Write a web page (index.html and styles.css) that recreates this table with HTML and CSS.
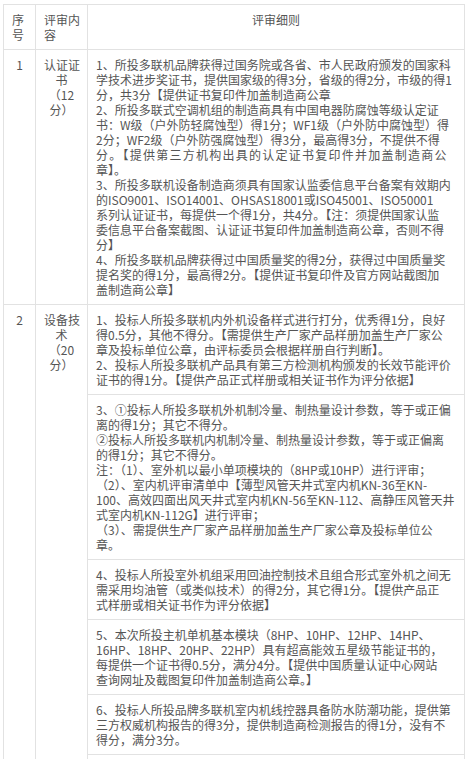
FILE: index.html
```html
<!DOCTYPE html>
<html lang="zh-CN">
<head>
<meta charset="utf-8">
<title>评审细则</title>
<link rel="stylesheet" href="styles.css">
</head>
<body>
<table class="rules">
  <colgroup>
    <col class="c-no">
    <col class="c-item">
    <col class="c-detail">
  </colgroup>
  <thead>
    <tr>
      <th class="h-left">序<br>号</th>
      <th class="h-left">评审内<br>容</th>
      <th class="h-center">评审细则</th>
    </tr>
  </thead>
  <tbody>
    <tr>
      <td class="no">1</td>
      <td class="item">认证证<br>书<br>（12<br>分）</td>
      <td class="detail">
        <p>1、所投多联机品牌获得过国务院或各省、市人民政府颁发的国家科<br>学技术进步奖证书，提供国家级的得3分，省级的得2分，市级的得1<br>分，共3分【提供证书复印件加盖制造商公章</p>
        <p>2、所投多联式空调机组的制造商具有中国电器防腐蚀等级认定证<br>书：W级（户外防轻腐蚀型）得1分；WF1级（户外防中腐蚀型）得<br>2分；WF2级（户外防强腐蚀型）得3分，最高得3分，不提供不得<br><span class="wide">分。【提供第三方机构出具的认定证书复印件并加盖制造商公</span><br>章】。</p>
        <p>3、所投多联机设备制造商须具有国家认监委信息平台备案有效期内<br>的ISO9001、ISO14001、OHSAS18001或ISO45001、ISO50001<br>系列认证证书，每提供一个得1分，共4分。【注：须提供国家认监<br>委信息平台备案截图、认证证书复印件加盖制造商公章，否则不得<br>分】</p>
        <p>4、所投多联机品牌获得过中国质量奖的得2分，获得过中国质量奖<br>提名奖的得1分，最高得2分。【提供证书复印件及官方网站截图加<br>盖制造商公章】</p>
      </td>
    </tr>
    <tr>
      <td class="no" rowspan="7">2</td>
      <td class="item" rowspan="7">设备技<br>术<br>（20<br>分）</td>
      <td class="detail">
        <p>1、投标人所投多联机内外机设备样式进行打分，优秀得1分，良好<br>得0.5分，其他不得分。【需提供生产厂家产品样册加盖生产厂家公<br>章及投标单位公章，由评标委员会根据样册自行判断】。</p>
        <p>2、投标人所投多联机产品具有第三方检测机构颁发的长效节能评价<br>证书的得1分。【提供产品正式样册或相关证书作为评分依据】</p>
      </td>
    </tr>
    <tr>
      <td class="detail">
        <p>3、①投标人所投多联机外机制冷量、制热量设计参数，等于或正偏<br>离的得1分；其它不得分。<br>②投标人所投多联机内机制冷量、制热量设计参数，等于或正偏离<br>的得1分；其它不得分。<br>注：（1）、室外机以最小单项模块的（8HP或10HP）进行评审；<br>（2）、室内机评审清单中【薄型风管天井式室内机KN-36至KN-<br>100、高效四面出风天井式室内机KN-56至KN-112、高静压风管天井<br>式室内机KN-112G】进行评审；<br>（3）、需提供生产厂家产品样册加盖生产厂家公章及投标单位公<br>章。</p>
      </td>
    </tr>
    <tr>
      <td class="detail">
        <p>4、投标人所投室外机组采用回油控制技术且组合形式室外机之间无<br>需采用均油管（或类似技术）的得2分，其它得1分。【提供产品正<br>式样册或相关证书作为评分依据】</p>
      </td>
    </tr>
    <tr>
      <td class="detail">
        <p>5、本次所投主机单机基本模块（8HP、10HP、12HP、14HP、<br>16HP、18HP、20HP、22HP）具有超高能效五星级节能证书的，<br>每提供一个证书得0.5分，满分4分。【提供中国质量认证中心网站<br>查询网址及截图复印件加盖制造商公章。】</p>
      </td>
    </tr>
    <tr>
      <td class="detail">
        <p>6、投标人所投品牌多联机室内机线控器具备防水防潮功能，提供第<br>三方权威机构报告的得3分，提供制造商检测报告的得1分，没有不<br>得分，满分3分。</p>
      </td>
    </tr>
    <tr>
      <td class="detail detail-more">
        <p>&nbsp;</p>
      </td>
    </tr>
  </tbody>
</table>
</body>
</html>
```

FILE: styles.css
```css
html,
body {
  background: #ffffff;
}

body {
  margin: 4px 0 0 3px;
  font-family: "Noto Sans CJK SC", "Noto Sans", sans-serif;
  font-size: 12px;
  line-height: 15px;
  color: #555555;
}

.rules {
  border-collapse: collapse;
  table-layout: fixed;
  width: 461px;
}

.c-no {
  width: 32px;
}

.c-item {
  width: 52px;
}

.c-detail {
  width: 377px;
}

.rules th,
.rules td {
  border: 1px solid #e2e2e2;
  padding: 7px 8px;
  vertical-align: top;
  font-weight: normal;
  white-space: nowrap;
}

.h-left {
  text-align: left;
}

.h-center {
  text-align: center;
}

.no,
.item {
  text-align: center;
}

.detail p {
  margin: 0;
}

.wide {
  letter-spacing: 1.25px;
}

.detail-more {
  height: 40px;
}
```
